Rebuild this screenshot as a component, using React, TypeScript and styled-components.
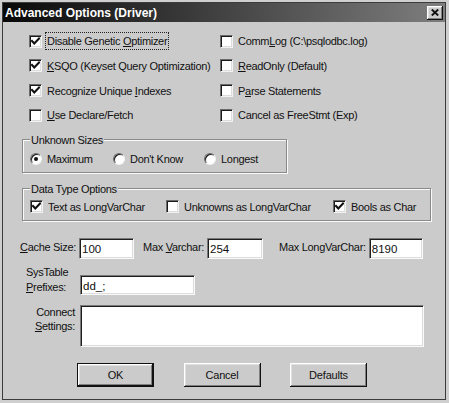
import React from "react";
import styled, { createGlobalStyle, css } from "styled-components";

const GlobalStyle = createGlobalStyle`
  html, body { margin: 0; padding: 0; background: #cfcfcf; }
  body { font-family: "Liberation Sans", Arial, sans-serif; color: #111; }
  #root { width: 449px; height: 403px; overflow: hidden; }
`;

const Window = styled.div`
  box-sizing: border-box;
  margin: 2px 3px 0 2px;
  width: 444px;
  height: 398px;
  border: 1px solid #3c3c3c;
  background: #cbcbcb;
  display: flex;
  flex-direction: column;
`;

const TitleBar = styled.div`
  height: 19px;
  flex: none;
  display: flex;
  align-items: center;
  justify-content: space-between;
  padding: 0 2px 0 2px;
  background: linear-gradient(to right, #080808 0%, #1a1a1a 15%, #7e7e7e 100%);
`;

const TitleText = styled.span`
  color: #fff;
  font-weight: bold;
  font-size: 12px;
  line-height: 14px;
  white-space: nowrap;
`;

const CloseButton = styled.div`
  width: 16px;
  height: 14px;
  box-sizing: border-box;
  background: #cbcbcb;
  display: flex;
  align-items: center;
  justify-content: center;
  box-shadow: inset -1px -1px 0 #111, inset 1px 1px 0 #fff,
    inset -2px -2px 0 #808080, inset 2px 2px 0 #e0e0e0;
`;

const Body = styled.div`
  flex: 1;
  display: flex;
  flex-direction: column;
  padding: 7px 0 0 17px;
`;

const CheckGrid = styled.div`
  display: grid;
  grid-template-columns: 191px 1fr;
  grid-auto-rows: 24.67px;
  align-items: center;
  margin-left: 9px;
`;

const Item = styled.label`
  display: flex;
  align-items: center;
  gap: 5px;
`;

const Text = styled.span<{ $focus?: boolean }>`
  font-size: 11px;
  letter-spacing: -0.3px;
  line-height: 14px;
  white-space: nowrap;
  color: #111;
  u { text-underline-offset: 1px; }
  ${(p) =>
    p.$focus &&
    css`
      outline: 1px dotted #222;
      outline-offset: 1px;
    `}
`;

const Box = styled.span`
  width: 13px;
  height: 13px;
  flex: none;
  box-sizing: border-box;
  background: #fff;
  border: 1px solid;
  border-color: #6a6a6a #f2f2f2 #f2f2f2 #6a6a6a;
  box-shadow: inset 1px 1px 0 #1a1a1a, inset -1px -1px 0 #dcdcdc;
  display: flex;
  align-items: center;
  justify-content: center;
`;

const RadioCircle = styled.span`
  width: 12px;
  height: 12px;
  flex: none;
  box-sizing: border-box;
  border-radius: 50%;
  background: #fff;
  border: 1px solid;
  border-color: #6a6a6a #f2f2f2 #f2f2f2 #6a6a6a;
  box-shadow: inset 1px 1px 0 #1a1a1a;
  display: flex;
  align-items: center;
  justify-content: center;
`;

const Dot = styled.span`
  width: 4px;
  height: 4px;
  border-radius: 50%;
  background: #111;
`;

const Group = styled.fieldset<{ $w: number; $mt: number; $pt: number }>`
  box-sizing: border-box;
  width: ${(p) => p.$w}px;
  margin: ${(p) => p.$mt}px 0 0 2px;
  padding: ${(p) => p.$pt}px 0 3px 7px;
  border: 1px solid #8a8a8a;
  box-shadow: inset 1px 1px 0 #fafafa, 1px 1px 0 #fafafa;
  min-width: 0;
`;

const Legend = styled.legend`
  padding: 0 1px;
  margin-left: 0;
  font-size: 11px;
  letter-spacing: -0.3px;
  line-height: 14px;
  background: #cbcbcb;
  color: #111;
`;

const OptionRow = styled.div<{ $cols: string }>`
  display: grid;
  grid-template-columns: ${(p) => p.$cols};
  align-items: center;
  height: 20px;
`;

const FieldRow = styled.div<{ $mt: number; $align: string }>`
  display: flex;
  align-items: ${(p) => p.$align};
  margin-top: ${(p) => p.$mt}px;
`;

const InlineLabel = styled.span<{ $ml?: number }>`
  font-size: 11px;
  letter-spacing: -0.3px;
  line-height: 14px;
  white-space: nowrap;
  margin-left: ${(p) => p.$ml ?? 0}px;
  margin-right: 3px;
  padding-top: 2px;
  u { text-underline-offset: 1px; }
`;

const BlockLabel = styled.div<{ $align: "left" | "right"; $lh: number }>`
  width: 55px;
  box-sizing: border-box;
  margin-right: 5px;
  font-size: 11px;
  letter-spacing: -0.3px;
  line-height: ${(p) => p.$lh}px;
  text-align: ${(p) => p.$align};
  padding-left: ${(p) => (p.$align === "left" ? 6 : 0)}px;
  white-space: nowrap;
  u { text-underline-offset: 1px; }
`;

const sunken = css`
  box-sizing: border-box;
  background: #fff;
  border: 1px solid;
  border-color: #7a7a7a #fafafa #fafafa #7a7a7a;
  box-shadow: inset 1px 1px 0 #1e1e1e, inset -1px -1px 0 #dcdcdc;
  font-family: "Liberation Sans", Arial, sans-serif;
  font-size: 11.5px;
  color: #111;
  outline: none;
  margin: 0;
`;

const TextInput = styled.input<{ $w: number; $h: number }>`
  ${sunken};
  width: ${(p) => p.$w}px;
  height: ${(p) => p.$h}px;
  padding: 2px 1px 0 2px;
`;

const TextArea = styled.textarea`
  ${sunken};
  width: 344px;
  height: 42px;
  resize: none;
  padding: 2px;
`;

const ButtonRow = styled.div`
  display: flex;
  gap: 29.5px;
  margin: 16px 0 0 57px;
`;

const Button = styled.div<{ $default?: boolean }>`
  box-sizing: border-box;
  width: 77px;
  height: 24px;
  background: #cbcbcb;
  display: flex;
  align-items: center;
  justify-content: center;
  font-size: 11px;
  letter-spacing: -0.2px;
  color: #111;
  box-shadow: inset -1px -1px 0 #111, inset 1px 1px 0 #fff,
    inset -2px -2px 0 #808080, inset 2px 2px 0 #e0e0e0;
  ${(p) =>
    p.$default &&
    css`
      border: 1px solid #111;
    `}
`;

const CheckMark = () => (
  <svg width="9" height="9" viewBox="0 0 9 9">
    <polyline
      points="1,4 3.3,6.5 8,1.6"
      fill="none"
      stroke="#111"
      strokeWidth="2.1"
      strokeLinecap="square"
    />
  </svg>
);

const Check = ({
  checked,
  focus,
  children,
}: {
  checked?: boolean;
  focus?: boolean;
  children: React.ReactNode;
}) => (
  <Item>
    <Box>{checked && <CheckMark />}</Box>
    <Text $focus={focus}>{children}</Text>
  </Item>
);

const Radio = ({ checked, children }: { checked?: boolean; children: React.ReactNode }) => (
  <Item>
    <RadioCircle>{checked && <Dot />}</RadioCircle>
    <Text>{children}</Text>
  </Item>
);

export default function App() {
  return (
    <>
      <GlobalStyle />
      <Window>
        <TitleBar>
          <TitleText>Advanced Options (Driver)</TitleText>
          <CloseButton>
            <svg width="8" height="7" viewBox="0 0 8 7">
              <path d="M0.8 0.5 L7.2 6.5 M7.2 0.5 L0.8 6.5" stroke="#111" strokeWidth="1.9" />
            </svg>
          </CloseButton>
        </TitleBar>
        <Body>
          <CheckGrid>
            <Check checked focus>
              Disable Genetic <u>O</u>ptimizer
            </Check>
            <Check>
              Comm<u>L</u>og (C:\psqlodbc.log)
            </Check>
            <Check checked>
              <u>K</u>SQO (Keyset Query Optimization)
            </Check>
            <Check>
              <u>R</u>eadOnly (Default)
            </Check>
            <Check checked>
              Recognize Unique <u>I</u>ndexes
            </Check>
            <Check>
              P<u>a</u>rse Statements
            </Check>
            <Check>
              <u>U</u>se Declare/Fetch
            </Check>
            <Check>Cancel as FreeStmt (Exp)</Check>
          </CheckGrid>

          <Group $w={265} $mt={5} $pt={2}>
            <Legend>Unknown Sizes</Legend>
            <OptionRow $cols="83px 91px auto">
              <Radio checked>Maximum</Radio>
              <Radio>Don't Know</Radio>
              <Radio>Longest</Radio>
            </OptionRow>
          </Group>

          <Group $w={409} $mt={9} $pt={1}>
            <Legend>Data Type Options</Legend>
            <OptionRow $cols="136px 167px auto">
              <Check checked>Text as LongVarChar</Check>
              <Check>Unknowns as LongVarChar</Check>
              <Check checked>Bools as Char</Check>
            </OptionRow>
          </Group>

          <FieldRow $mt={17} $align="flex-start">
            <InlineLabel>
              <u>C</u>ache Size:
            </InlineLabel>
            <TextInput $w={55} $h={21} defaultValue="100" readOnly />
            <InlineLabel $ml={9}>
              Max <u>V</u>archar:
            </InlineLabel>
            <TextInput $w={56} $h={21} defaultValue="254" readOnly />
            <InlineLabel $ml={16}>Max LongVarChar:</InlineLabel>
            <TextInput $w={54} $h={21} defaultValue="8190" readOnly />
          </FieldRow>

          <FieldRow $mt={6} $align="flex-end">
            <BlockLabel $align="left" $lh={15}>
              SysTable
              <br />
              <u>P</u>refixes:
            </BlockLabel>
            <TextInput $w={115} $h={20} defaultValue="dd_;" readOnly />
          </FieldRow>

          <FieldRow $mt={10} $align="flex-start">
            <BlockLabel $align="right" $lh={14}>
              Connect
              <br />
              <u>S</u>ettings:
            </BlockLabel>
            <TextArea readOnly defaultValue="" />
          </FieldRow>

          <ButtonRow>
            <Button $default>OK</Button>
            <Button>Cancel</Button>
            <Button>Defaults</Button>
          </ButtonRow>
        </Body>
      </Window>
    </>
  );
}
